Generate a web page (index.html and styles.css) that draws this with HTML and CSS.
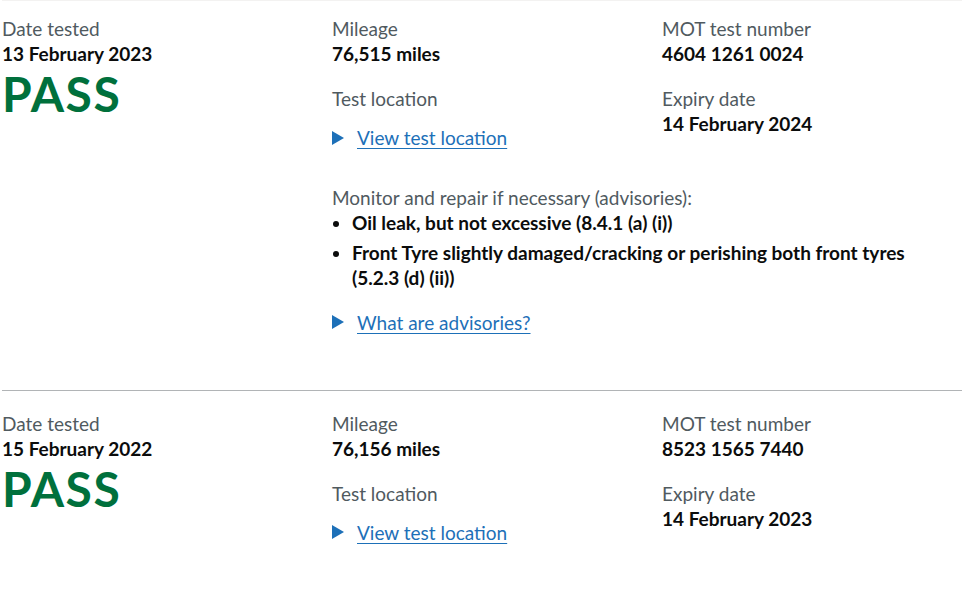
FILE: index.html
```html
<!DOCTYPE html>
<html lang="en">
<head>
<meta charset="utf-8">
<title>MOT history</title>
<link rel="stylesheet" href="styles.css">
</head>
<body>
<div class="page">
  <section class="record record-first">
    <div class="col">
      <dl class="item">
        <dt class="label">Date tested</dt>
        <dd class="value">13 February 2023</dd>
      </dl>
      <p class="result">PASS</p>
    </div>
    <div class="col">
      <dl class="item">
        <dt class="label">Mileage</dt>
        <dd class="value">76,515 miles</dd>
      </dl>
      <div class="item">
        <p class="label">Test location</p>
        <a class="summary" href="#"><span class="arrow"></span><span class="summary-text">View test location</span></a>
      </div>
    </div>
    <div class="col">
      <dl class="item">
        <dt class="label">MOT test number</dt>
        <dd class="value">4604 1261 0024</dd>
      </dl>
      <dl class="item">
        <dt class="label">Expiry date</dt>
        <dd class="value">14 February 2024</dd>
      </dl>
    </div>
    <div class="advisories">
      <p class="label">Monitor and repair if necessary (advisories):</p>
      <ul class="defects">
        <li>Oil leak, but not excessive (8.4.1 (a) (i))</li>
        <li>Front Tyre slightly damaged/cracking or perishing both front tyres (5.2.3 (d) (ii))</li>
      </ul>
      <a class="summary" href="#"><span class="arrow"></span><span class="summary-text">What are advisories?</span></a>
    </div>
  </section>
  <section class="record">
    <div class="col">
      <dl class="item">
        <dt class="label">Date tested</dt>
        <dd class="value">15 February 2022</dd>
      </dl>
      <p class="result">PASS</p>
    </div>
    <div class="col">
      <dl class="item">
        <dt class="label">Mileage</dt>
        <dd class="value">76,156 miles</dd>
      </dl>
      <div class="item">
        <p class="label">Test location</p>
        <a class="summary" href="#"><span class="arrow"></span><span class="summary-text">View test location</span></a>
      </div>
    </div>
    <div class="col">
      <dl class="item">
        <dt class="label">MOT test number</dt>
        <dd class="value">8523 1565 7440</dd>
      </dl>
      <dl class="item">
        <dt class="label">Expiry date</dt>
        <dd class="value">14 February 2023</dd>
      </dl>
    </div>
  </section>
</div>
</body>
</html>
```
FILE: styles.css
```css
html, body {
  margin: 0;
  padding: 0;
  background: #ffffff;
}
body {
  font-family: "Lato", "Noto Sans", "Liberation Sans", sans-serif;
  font-size: 19px;
  line-height: 25px;
  color: #0b0c0c;
}
.page {
  width: 960px;
  margin-left: 2px;
  border-top: 1px solid #f3f2f1;
}
.record {
  display: grid;
  grid-template-columns: 330px 330px 1fr;
  padding-top: 15px;
  padding-bottom: 55px;
}
.record + .record {
  border-top: 1px solid #b1b4b6;
  padding-top: 20px;
}
.col {
  display: flex;
  flex-direction: column;
}
.item {
  margin: 0 0 20px 0;
}
.label {
  margin: 0;
  color: #505a5f;
  font-weight: 400;
}
.value {
  margin: 0;
  font-weight: 700;
}
.result {
  margin: -17px 0 0 0;
  font-size: 48px;
  line-height: 50px;
  font-weight: 700;
  letter-spacing: 1.5px;
  color: #00703c;
}
.summary {
  display: inline-flex;
  align-items: center;
  margin-top: 14px;
  color: #1d70b8;
  text-decoration: none;
}
.arrow {
  width: 0;
  height: 0;
  border-style: solid;
  border-width: 7px 0 7px 12px;
  border-color: transparent transparent transparent #1d70b8;
  margin-right: 13px;
}
.summary-text {
  text-decoration: underline;
  text-decoration-thickness: 1px;
  text-underline-offset: 3px;
}
.advisories {
  grid-column: 2 / 4;
  margin-top: 15px;
}
.defects {
  max-width: 590px;
  margin: 0 0 19px 0;
  padding-left: 20px;
  font-weight: 700;
}
.defects li {
  margin-bottom: 5px;
}
.advisories .summary {
  margin-top: 0;
}
```
